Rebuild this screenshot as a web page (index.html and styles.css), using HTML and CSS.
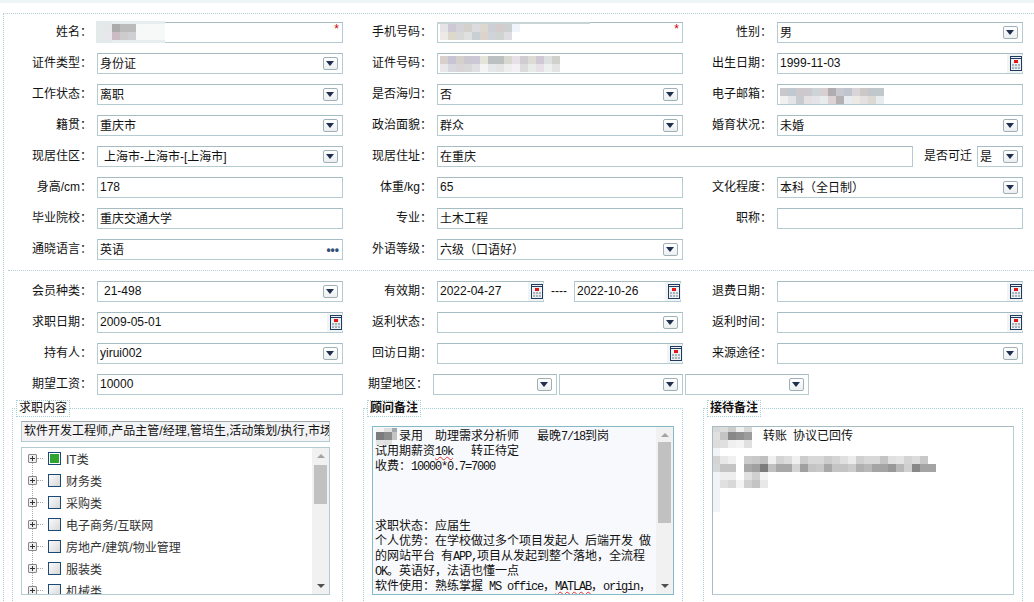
FILE: index.html
```html
<!DOCTYPE html>
<html lang="zh-CN">
<head>
    <meta charset="UTF-8">
    <title>会员资料</title>
    <link rel="stylesheet" href="styles.css">
</head>
<body>
    <svg class="defs" width="0" height="0">
        <symbol id="cal" viewBox="0 0 12 15">
            <rect x="0.5" y="0.5" width="11" height="14" fill="#eef1f3" stroke="#1f3a5c"/>
            <rect x="1" y="2" width="10" height="1" fill="#1f3a5c"/>
            <rect x="4" y="4" width="4" height="3" fill="#e01818"/>
            <rect x="2" y="8" width="8" height="5" fill="#a9b4ba"/>
            <path d="M4.5 8v5M7.5 8v5M2 10.5h8" stroke="#e4e8ea"/>
        </symbol>
    </svg>
    <div class="topbar"></div>
    <div class="form">
        <div class="form-grid">
            <label class="label">姓名：</label>
            <div class="field masked">
                <span class="val"></span><span class="star">*</span>
                <svg class="mosaic name-mosaic" width="69" height="22">
                    <rect x="0" y="0" width="69" height="22" fill="#f7f9f9"/>
                    <rect x="0" y="0" width="69" height="3" fill="#e8eeee"/>
                    <rect x="0" y="19" width="69" height="3" fill="#e8eeee"/>
                    <rect x="0" y="0" width="16" height="22" fill="#e4eaea"/>
                    <rect x="8" y="3" fill="#e4e8e8"/><rect x="16" y="3" fill="#ababab"/><rect x="24" y="3" fill="#bbb"/><rect x="32" y="3" fill="#bbb"/>
                    <rect x="8" y="11" fill="#e8e8ec"/><rect x="16" y="11" fill="#cbbcc4"/><rect x="24" y="11" fill="#ccc"/><rect x="32" y="11" fill="#cfd0d4"/>
                </svg>
            </div>
            <label class="label">手机号码：</label>
            <div class="field masked">
                <span class="val"></span><span class="star">*</span>
                <svg class="mosaic phone-mosaic" width="153" height="18">
                    <rect x="0" y="0" width="153" height="2" fill="#c8d4d4"/>
                    <rect x="3" y="2" fill="#e4e4e4"/><rect x="11" y="2" fill="#ccc8d4"/><rect x="19" y="2" fill="#d4d4d8"/><rect x="27" y="2" fill="#d4d0cc"/><rect x="35" y="2" fill="#dcdce0"/><rect x="43" y="2" fill="#dcd8d0"/><rect x="51" y="2" fill="#ccd0d4"/><rect x="59" y="2" fill="#d4cccc"/><rect x="67" y="2" fill="#ccd0d0"/><rect x="75" y="2" fill="#f0f4fc"/>
                    <rect x="3" y="10" fill="#ece9e6"/><rect x="11" y="10" fill="#dcd8cc"/><rect x="19" y="10" fill="#d8d8d8"/><rect x="27" y="10" fill="#e0e0e0"/><rect x="35" y="10" fill="#c8d0d4"/><rect x="43" y="10" fill="#dcd4cc"/><rect x="51" y="10" fill="#d0d4d8"/><rect x="59" y="10" fill="#d0d4d0"/><rect x="67" y="10" fill="#e0dce4"/>
                </svg>
            </div>
            <label class="label">性别：</label>
            <div class="field"><span class="val">男</span><span class="arrow"></span></div>

            <label class="label">证件类型：</label>
            <div class="field"><span class="val">身份证</span><span class="arrow"></span></div>
            <label class="label">证件号码：</label>
            <div class="field masked">
                <span class="val"></span>
                <svg class="mosaic id-mosaic" width="120" height="16">
                    <rect x="0" y="0" fill="#d8d0cc"/><rect x="8" y="0" fill="#c8c4d4"/><rect x="16" y="0" fill="#d4d0cc"/><rect x="24" y="0" fill="#ccc8d0"/><rect x="32" y="0" fill="#ccc8d8"/><rect x="40" y="0" fill="#e4e4d8"/><rect x="48" y="0" fill="#bcc0c0"/><rect x="56" y="0" fill="#bcc0c0"/><rect x="64" y="0" fill="#d8d8d0"/><rect x="72" y="0" fill="#e8e0e8"/><rect x="80" y="0" fill="#d0ccd0"/><rect x="88" y="0" fill="#dcdcd4"/><rect x="96" y="0" fill="#d0c8d4"/><rect x="104" y="0" fill="#dce0e0"/><rect x="112" y="0" fill="#d0d0cc"/>
                    <rect x="0" y="8" fill="#e8e8e8"/><rect x="8" y="8" fill="#d8d8e0"/><rect x="16" y="8" fill="#d8d4d8"/><rect x="24" y="8" fill="#d8d8d8"/><rect x="32" y="8" fill="#e0e0e4"/><rect x="40" y="8" fill="#f4f4f4"/><rect x="48" y="8" fill="#e4e8e8"/><rect x="56" y="8" fill="#e4e4e4"/><rect x="64" y="8" fill="#eee"/><rect x="72" y="8" fill="#f4f0f4"/><rect x="80" y="8" fill="#dcdcdc"/><rect x="88" y="8" fill="#e8ece8"/><rect x="96" y="8" fill="#e8e0e8"/><rect x="104" y="8" fill="#eef0f0"/><rect x="112" y="8" fill="#e4e4e4"/>
                </svg>
            </div>
            <label class="label">出生日期：</label>
            <div class="field"><span class="val">1999-11-03</span><span class="cal-btn"><svg width="12" height="15"><use href="#cal"/></svg></span></div>

            <label class="label">工作状态：</label>
            <div class="field"><span class="val">离职</span><span class="arrow"></span></div>
            <label class="label">是否海归：</label>
            <div class="field"><span class="val">否</span><span class="arrow"></span></div>
            <label class="label">电子邮箱：</label>
            <div class="field masked">
                <span class="val"></span>
                <svg class="mosaic mail-mosaic" width="108" height="16">
                    <rect x="0" y="0" fill="#c8c8cc"/><rect x="8" y="0" fill="#c0c8d0"/><rect x="16" y="0" fill="#ccc8cc"/><rect x="24" y="0" fill="#ccc8d0"/><rect x="32" y="0" fill="#ccd4d8"/><rect x="40" y="0" fill="#d8d0d0"/><rect x="48" y="0" fill="#b0acb0"/><rect x="56" y="0" fill="#c8c8d0"/><rect x="64" y="0" fill="#c0c4cc"/><rect x="72" y="0" fill="#d8d4d8"/><rect x="80" y="0" fill="#ccc8c8"/><rect x="88" y="0" fill="#c0c8cc"/><rect x="96" y="0" fill="#c0c8cc"/>
                    <rect x="0" y="8" fill="#f0f0f0"/><rect x="8" y="8" fill="#e4e4e8"/><rect x="16" y="8" fill="#c8ccd0"/><rect x="24" y="8" fill="#e4e0e4"/><rect x="32" y="8" fill="#e4e4e8"/><rect x="40" y="8" fill="#e8ecec"/><rect x="48" y="8" fill="#dcd4d4"/><rect x="56" y="8" fill="#b4b0b4"/><rect x="64" y="8" fill="#e8ecf0"/><rect x="72" y="8" fill="#ece8e4"/><rect x="80" y="8" fill="#e4e0e0"/><rect x="88" y="8" fill="#dcd8d4"/><rect x="96" y="8" fill="#e8ecee"/>
                </svg>
            </div>

            <label class="label">籍贯：</label>
            <div class="field"><span class="val">重庆市</span><span class="arrow"></span></div>
            <label class="label">政治面貌：</label>
            <div class="field"><span class="val">群众</span><span class="arrow"></span></div>
            <label class="label">婚育状况：</label>
            <div class="field"><span class="val">未婚</span><span class="arrow"></span></div>

            <label class="label">现居住区：</label>
            <div class="field"><span class="val indent">上海市-上海市-[上海市]</span><span class="arrow"></span></div>
            <label class="label">现居住址：</label>
            <div class="span-row">
                <div class="field address"><span class="val">在重庆</span></div>
                <label class="label move-label">是否可迁</label>
                <div class="field move"><span class="val">是</span><span class="arrow"></span></div>
            </div>

            <label class="label">身高/cm：</label>
            <div class="field"><span class="val">178</span></div>
            <label class="label">体重/kg：</label>
            <div class="field"><span class="val">65</span></div>
            <label class="label">文化程度：</label>
            <div class="field"><span class="val">本科（全日制）</span><span class="arrow"></span></div>

            <label class="label">毕业院校：</label>
            <div class="field"><span class="val">重庆交通大学</span></div>
            <label class="label">专业：</label>
            <div class="field"><span class="val">土木工程</span></div>
            <label class="label">职称：</label>
            <div class="field"><span class="val"></span></div>

            <label class="label">通晓语言：</label>
            <div class="field"><span class="val">英语</span><span class="dots">•••</span></div>
            <label class="label">外语等级：</label>
            <div class="field"><span class="val">六级（口语好）</span><span class="arrow"></span></div>
        </div>

        <div class="form-grid second">
            <label class="label">会员种类：</label>
            <div class="field"><span class="val indent">21-498</span><span class="arrow"></span></div>
            <label class="label">有效期：</label>
            <div class="date-row">
                <div class="field date"><span class="val">2022-04-27</span><span class="cal-btn"><svg width="12" height="15"><use href="#cal"/></svg></span></div>
                <span class="dash">----</span>
                <div class="field date"><span class="val">2022-10-26</span><span class="cal-btn"><svg width="12" height="15"><use href="#cal"/></svg></span></div>
            </div>
            <label class="label">退费日期：</label>
            <div class="field"><span class="val"></span><span class="cal-btn"><svg width="12" height="15"><use href="#cal"/></svg></span></div>

            <label class="label">求职日期：</label>
            <div class="field"><span class="val">2009-05-01</span><span class="cal-btn"><svg width="12" height="15"><use href="#cal"/></svg></span></div>
            <label class="label">返利状态：</label>
            <div class="field"><span class="val"></span><span class="arrow"></span></div>
            <label class="label">返利时间：</label>
            <div class="field"><span class="val"></span><span class="cal-btn"><svg width="12" height="15"><use href="#cal"/></svg></span></div>

            <label class="label">持有人：</label>
            <div class="field"><span class="val">yirui002</span><span class="arrow"></span></div>
            <label class="label">回访日期：</label>
            <div class="field"><span class="val"></span><span class="cal-btn"><svg width="12" height="15"><use href="#cal"/></svg></span></div>
            <label class="label">来源途径：</label>
            <div class="field"><span class="val"></span><span class="arrow"></span></div>

            <label class="label">期望工资：</label>
            <div class="field"><span class="val">10000</span></div>
            <div class="span-row area-row">
                <label class="label area-label">期望地区：</label>
                <div class="field area"><span class="val"></span><span class="arrow"></span></div>
                <div class="field area"><span class="val"></span><span class="arrow"></span></div>
                <div class="field area"><span class="val"></span><span class="arrow"></span></div>
            </div>
        </div>

        <div class="groups">
            <fieldset class="group job-group">
                <legend>求职内容</legend>
                <div class="job-input">软件开发工程师,产品主管/经理,管培生,活动策划/执行,市场营销</div>
                <div class="tree-box">
                    <ul class="tree">
                        <li><span class="expander"></span><span class="check checked"></span>IT类</li>
                        <li><span class="expander"></span><span class="check"></span>财务类</li>
                        <li><span class="expander"></span><span class="check"></span>采购类</li>
                        <li><span class="expander"></span><span class="check"></span>电子商务/互联网</li>
                        <li><span class="expander"></span><span class="check"></span>房地产/建筑/物业管理</li>
                        <li><span class="expander"></span><span class="check"></span>服装类</li>
                        <li><span class="expander"></span><span class="check"></span>机械类</li>
                    </ul>
                    <div class="scrollbar tree-scroll"><span class="up"></span><span class="thumb"></span><span class="down"></span></div>
                </div>
            </fieldset>

            <fieldset class="group">
                <legend class="strong">顾问备注</legend>
                <div class="note-box advisor">
                    <div class="note-text">
                        <svg class="mosaic advisor-mosaic" width="24" height="17">
                            <rect x="0" y="0" height="4" fill="#f4f4f4"/><rect x="8" y="0" height="4" fill="#e0e0e0"/><rect x="16" y="0" width="5" height="4" fill="#a0a8b0"/>
                            <rect x="0" y="4" fill="#7c7c7c"/><rect x="8" y="4" fill="#8c8c8c"/><rect x="16" y="4" width="5" fill="#c4c4c4"/>
                            <rect x="0" y="12" height="5" fill="#e4e4e4"/><rect x="8" y="12" height="5" fill="#e0e0e0"/>
                        </svg>
                        <div class="first-line">录用<span class="en">  </span>助理需求分析师<span class="en">   </span>最晚<span class="en">7/18</span>到岗</div>
                        <div>试用期薪资<span class="en typo">10k</span><span class="en">   </span>转正待定</div>
                        <div>收费：<span class="en">10000*0.7=7000</span></div>
                        <div>&nbsp;</div>
                        <div>&nbsp;</div>
                        <div>&nbsp;</div>
                        <div>求职状态：应届生</div>
                        <div>个人优势：在学校做过多个项目发起人<span class="en"> </span>后端开发<span class="en"> </span>做</div>
                        <div>的网站平台<span class="en"> </span>有<span class="en">APP,</span>项目从发起到整个落地，全流程</div>
                        <div><span class="en">OK</span>。英语好，法语也懂一点</div>
                        <div>软件使用：熟练掌握<span class="en"> MS office</span>，<span class="en typo">MATLAB</span>，<span class="en">origin</span>，</div>
                    </div>
                    <div class="scrollbar note-scroll"><span class="up"></span><span class="thumb"></span><span class="down"></span></div>
                </div>
            </fieldset>

            <fieldset class="group">
                <legend class="strong">接待备注</legend>
                <div class="note-box reception">
                    <svg class="mosaic reception-mosaic" width="224" height="85">
                        <rect x="0" y="0" height="5" fill="#d8d8d8"/><rect x="8" y="0" height="5" fill="#dcdcdc"/><rect x="16" y="0" height="5" fill="#ccc"/><rect x="24" y="0" height="5" fill="#f0f0f0"/><rect x="32" y="0" height="5" fill="#d8d8d8"/>
                        <rect x="0" y="5" fill="#e0e0e0"/><rect x="8" y="5" fill="#c4c4c4"/><rect x="16" y="5" fill="#888"/><rect x="24" y="5" fill="#909090"/><rect x="32" y="5" fill="#9c9c9c"/>
                        <rect x="0" y="13" fill="#dcdcdc"/><rect x="8" y="13" fill="#e0e0e0"/><rect x="16" y="13" fill="#f0f0f0"/><rect x="24" y="13" fill="#f4f4f4"/><rect x="32" y="13" fill="#e0e0e0"/>
                        <rect x="0" y="21" fill="#f0f4f6"/>
                        <rect x="0" y="29" fill="#d4d4d4"/><rect x="8" y="29" fill="#e8e8e8"/><rect x="16" y="29" fill="#f0f0f0"/><rect x="32" y="29" fill="#ccc"/><rect x="40" y="29" fill="#c8c8c8"/><rect x="48" y="29" fill="#c0c0c0"/><rect x="56" y="29" fill="#f0f0f0"/><rect x="64" y="29" fill="#d4d4d4"/><rect x="72" y="29" fill="#dcdcdc"/><rect x="80" y="29" fill="#f0f0f0"/><rect x="88" y="29" fill="#ccc"/><rect x="96" y="29" fill="#d8d8d8"/><rect x="104" y="29" fill="#d8d8d8"/><rect x="112" y="29" fill="#ccc"/><rect x="120" y="29" fill="#d4d4d4"/><rect x="128" y="29" fill="#e0e0e0"/><rect x="136" y="29" fill="#ececec"/><rect x="144" y="29" fill="#d0d0d0"/><rect x="152" y="29" fill="#d8d8d8"/><rect x="160" y="29" fill="#d8d8d8"/><rect x="168" y="29" fill="#c4c4c4"/><rect x="176" y="29" fill="#e0e0e0"/><rect x="184" y="29" fill="#e4e4e4"/><rect x="192" y="29" fill="#d4d4d4"/><rect x="200" y="29" fill="#dcdcdc"/><rect x="208" y="29" fill="#c8c8c8"/>
                        <rect x="0" y="37" fill="#d4d8d8"/><rect x="8" y="37" fill="#c4c4c4"/><rect x="16" y="37" fill="#c4c4c4"/><rect x="32" y="37" fill="#a8a8a8"/><rect x="40" y="37" fill="#a0a0a0"/><rect x="48" y="37" fill="#7c7c7c"/><rect x="56" y="37" fill="#c0c0c0"/><rect x="64" y="37" fill="#a8a8a8"/><rect x="72" y="37" fill="#a8a8a8"/><rect x="80" y="37" fill="#d4d4d4"/><rect x="88" y="37" fill="#a0a0a0"/><rect x="96" y="37" fill="#c4c4c4"/><rect x="104" y="37" fill="#c8c8c8"/><rect x="112" y="37" fill="#a8a8a8"/><rect x="120" y="37" fill="#c4c4c4"/><rect x="128" y="37" fill="#c4c4c4"/><rect x="136" y="37" fill="#ccc"/><rect x="144" y="37" fill="#b0b0b0"/><rect x="152" y="37" fill="#b8b8b8"/><rect x="160" y="37" fill="#a4a4a4"/><rect x="168" y="37" fill="#a4a4a4"/><rect x="176" y="37" fill="#989898"/><rect x="184" y="37" fill="#b8b8b8"/><rect x="192" y="37" fill="#d0d0d0"/><rect x="200" y="37" fill="#888"/><rect x="208" y="37" fill="#a4a4a4"/><rect x="216" y="37" fill="#a4a4a4"/>
                        <rect x="0" y="45" fill="#f0f4f6"/><rect x="8" y="45" fill="#eee"/><rect x="16" y="45" fill="#eee"/><rect x="32" y="45" fill="#e0e0e0"/><rect x="40" y="45" fill="#d0d0d0"/><rect x="48" y="45" fill="#f4f4f4"/>
                        <rect x="0" y="53" fill="#f0f4f6"/><rect x="8" y="53" fill="#e0e0e0"/><rect x="16" y="53" fill="#d8d8d8"/><rect x="24" y="53" fill="#f4f4f4"/><rect x="32" y="53" fill="#d0d0d0"/><rect x="40" y="53" fill="#c4c4c4"/><rect x="48" y="53" fill="#e8e8e8"/>
                        <rect x="0" y="61" fill="#f0f4f6"/><rect x="0" y="69" fill="#f0f4f6"/><rect x="0" y="77" fill="#f0f4f6"/>
                    </svg>
                    <div class="note-text first-line">转账<span class="en"> </span>协议已回传</div>
                </div>
            </fieldset>
        </div>
    </div>
</body>
</html>
```

FILE: styles.css
```css
html, body {
    margin: 0;
    padding: 0;
    height: 602px;
    overflow: hidden;
}

body {
    background: #ffffff;
    color: #111111;
    font-family: "Liberation Sans", "Noto Sans CJK SC", sans-serif;
    font-size: 12px;
}

.defs {
    position: absolute;
}

.topbar {
    height: 3px;
    background: #edf5f5;
}

.form {
    margin: 10px 0 0 3px;
    padding-top: 8px;
    border-top: 1px dotted #b4ccd0;
    border-left: 1px dotted #b4ccd0;
}

.form-grid {
    display: grid;
    grid-template-columns: 93px 246px 94px 246px 94px 246px;
    grid-auto-rows: 21px;
    row-gap: 10px;
}

.form-grid.second {
    margin: 10px 0 0 4px;
    padding-top: 10px;
    border-top: 1px dotted #b4d2d8;
    grid-template-columns: 89px 246px 94px 246px 94px 246px;
}

.label {
    padding-right: 5px;
    font-family: "Liberation Sans", "Noto Sans CJK TC", sans-serif;
    line-height: 21px;
    text-align: right;
    white-space: nowrap;
}

.field {
    position: relative;
    display: flex;
    align-items: center;
    box-sizing: border-box;
    height: 21px;
    background: #ffffff;
    border: 1px solid #b3cbd1;
    border-top-color: #a6bcc2;
}

.val {
    flex: 1;
    margin-top: -2px;
    padding-left: 2px;
    overflow: hidden;
    white-space: nowrap;
}

.val.indent {
    padding-left: 6px;
}

.arrow {
    position: relative;
    flex: none;
    box-sizing: border-box;
    width: 15px;
    height: 13px;
    margin-right: 4px;
    background: linear-gradient(#ffffff, #eceff0);
    border: 1px solid #9fb1b7;
    border-radius: 2px;
}

.arrow::before {
    content: "";
    position: absolute;
    top: 3px;
    left: 2px;
    border-top: 5px solid #1e2f50;
    border-left: 4.5px solid transparent;
    border-right: 4.5px solid transparent;
}

.cal-btn {
    display: flex;
    flex: none;
    align-items: center;
    justify-content: flex-end;
    box-sizing: border-box;
    width: 16px;
    height: 19px;
    margin-right: -1px;
    padding-right: 1px;
    background: #f1f4f5;
    border-radius: 0 3px 3px 0;
}

.star {
    align-self: flex-start;
    margin-right: 3px;
    color: #d40000;
    font-size: 12px;
    line-height: 13px;
}

.dots {
    margin-right: 3px;
    color: #33507a;
    font-size: 12px;
    font-weight: bold;
}

.span-row {
    display: flex;
    grid-column: 4 / 7;
}

.date-row {
    display: flex;
}

.field.address {
    width: 476px;
}

.move-label {
    flex: none;
    width: 64px;
    box-sizing: border-box;
}

.field.move {
    width: 46px;
}

.field.date {
    width: 107px;
}

.dash {
    width: 30px;
    line-height: 21px;
    text-align: center;
}

.span-row.area-row {
    grid-column: 3 / 7;
    gap: 2px;
}

.area-label {
    width: 88px;
    box-sizing: border-box;
    padding-right: 3px;
}

.field.area {
    width: 124px;
}

.mosaic {
    position: absolute;
    shape-rendering: crispEdges;
}

.mosaic rect:not([width]) {
    width: 8px;
}

.mosaic rect:not([height]) {
    height: 8px;
}

.name-mosaic {
    top: -2px;
    left: -2px;
}

.phone-mosaic {
    top: -1px;
    left: -1px;
}

.id-mosaic {
    top: 2px;
    left: 2px;
}

.mail-mosaic {
    top: 3px;
    left: 2px;
}

.groups {
    display: grid;
    grid-template-columns: 331px 320px 320px;
    column-gap: 20px;
    margin: 5px 0 0 8px;
}

.group {
    box-sizing: border-box;
    min-width: 0;
    height: 203px;
    margin: 0;
    padding: 9px 0 0 8px;
    border: 1px dotted #a9d0d6;
}

.group legend {
    box-sizing: border-box;
    height: 17px;
    margin-left: -5px;
    padding: 0 2px;
    border: 1px dotted #a9d0d6;
    line-height: 15px;
}

.group legend.strong {
    font-weight: bold;
}

.job-group {
    padding-top: 4px;
}

.job-input {
    box-sizing: border-box;
    width: 309px;
    height: 21px;
    padding-left: 2px;
    overflow: hidden;
    background: #f3f3f5;
    border: 1px solid #b3cbd1;
    border-top-color: #a0a8ab;
    line-height: 19px;
    white-space: nowrap;
}

.tree-box {
    display: flex;
    box-sizing: border-box;
    width: 309px;
    height: 148px;
    margin-top: 5px;
    border: 1px solid #b3cbd1;
}

.tree {
    flex: 1;
    margin: 0;
    padding: 0;
    overflow: hidden;
    list-style: none;
}

.tree li {
    display: flex;
    align-items: center;
    height: 22px;
    color: #333333;
    white-space: nowrap;
}

.tree li:first-child {
    margin-top: -1px;
}

.expander {
    position: relative;
    flex: none;
    box-sizing: border-box;
    width: 9px;
    height: 9px;
    margin: 0 11px 0 6px;
    background:
        linear-gradient(#333, #333) center / 5px 1px no-repeat,
        linear-gradient(#333, #333) center / 1px 5px no-repeat,
        #eeeeee;
    border: 1px solid #888888;
    border-radius: 1px;
}

.expander::before {
    content: "";
    position: absolute;
    top: 8px;
    left: 3px;
    height: 13px;
    border-left: 1px dotted #aaaaaa;
}

.expander::after {
    content: "";
    position: absolute;
    top: 3px;
    left: 8px;
    width: 6px;
    border-top: 1px dotted #aaaaaa;
}

.check {
    flex: none;
    box-sizing: border-box;
    width: 13px;
    height: 13px;
    margin-right: 5px;
    background: linear-gradient(135deg, #fafafa, #d8d8d8);
    border: 1px solid #1c4a78;
}

.check.checked {
    background: #2fa52f;
    box-shadow: inset 0 0 0 1px #ffffff;
}

.scrollbar {
    display: flex;
    flex: none;
    flex-direction: column;
    align-items: center;
    box-sizing: border-box;
    width: 17px;
    background: #f1f1f1;
}

.scrollbar .up {
    margin-top: 6px;
    border-bottom: 4px solid #a3a3a3;
    border-left: 4px solid transparent;
    border-right: 4px solid transparent;
}

.scrollbar .thumb {
    width: 13px;
    background: #c1c1c1;
}

.scrollbar .down {
    margin-top: auto;
    margin-bottom: 6px;
    border-top: 4px solid #505050;
    border-left: 4px solid transparent;
    border-right: 4px solid transparent;
}

.tree-scroll .thumb {
    height: 39px;
    margin-top: 7px;
}

.note-scroll .thumb {
    height: 81px;
    margin-top: 5px;
}

.note-box {
    position: relative;
    display: flex;
    box-sizing: border-box;
    width: 302px;
    height: 169px;
    overflow: hidden;
    background: #ffffff;
    border: 1px solid #b3cbd1;
    border-top-color: #a6bcc2;
    border-left-color: #a6bcc2;
}

.note-box.advisor {
    background: #f8f9fc;
    border-color: #84bac8;
}

.note-text {
    flex: 1;
    padding: 2px 0 0 2px;
    overflow: hidden;
    color: #111111;
    line-height: 15px;
    white-space: nowrap;
}

.note-text div {
    height: 15px;
}

.first-line {
    text-indent: 24px;
}

.reception .first-line {
    text-indent: 48px;
}

.en {
    font-family: "Liberation Mono", monospace;
    font-size: 12px;
    line-height: 1;
    letter-spacing: -1.2px;
    white-space: pre;
}

.typo {
    text-decoration: underline wavy #e03030 1px;
}

.advisor-mosaic {
    top: 1px;
    left: 3px;
}

.reception-mosaic {
    top: 0;
    left: -1px;
}
```
